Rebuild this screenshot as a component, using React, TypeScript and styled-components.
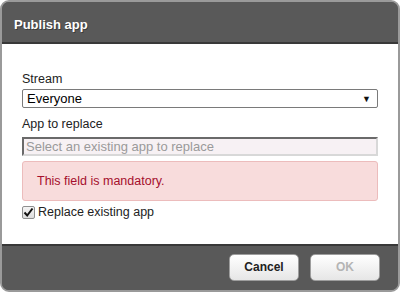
import React from "react";
import styled, { createGlobalStyle } from "styled-components";

const Global = createGlobalStyle`
  html, body { margin: 0; padding: 0; background: #ffffff; }
  * { box-sizing: border-box; }
`;

const Dialog = styled.div`
  width: 400px;
  height: 292px;
  border: 2px solid #9a9a9a;
  border-radius: 9px;
  overflow: hidden;
  display: flex;
  flex-direction: column;
  background: #595959;
  font-family: "Liberation Sans", Arial, sans-serif;
`;

const Header = styled.div`
  height: 42px;
  flex: none;
  background: #595959;
  border-bottom: 2px solid #383838;
  display: flex;
  align-items: center;
  padding: 4px 0 0 12px;
`;

const Title = styled.h1`
  margin: 0;
  font-size: 13px;
  font-weight: bold;
  color: #ffffff;
  text-shadow: 1px 1px 0 rgba(0, 0, 0, 0.35);
`;

const Body = styled.div`
  flex: 1;
  background: #ffffff;
  padding: 26px 20px 0 20px;
  display: flex;
  flex-direction: column;
`;

const Label = styled.div`
  font-size: 12.5px;
  color: #222;
  height: 18px;
  line-height: 18px;
`;

const Select = styled.div`
  margin-top: 1px;
  height: 19px;
  border: 1px solid #7a7a7a;
  border-radius: 2px;
  display: flex;
  align-items: center;
  justify-content: space-between;
  padding: 0 6px 0 4px;
  font-size: 13px;
  color: #000;
  margin-bottom: 7px;
`;

const Arrow = styled.span`
  font-size: 9px;
  color: #111;
`;

const Input = styled.div`
  margin-top: 4px;
  height: 19px;
  border-top: 2px solid #6a6a6a;
  border-left: 2px solid #6a6a6a;
  border-right: 2px solid #d8d8d8;
  border-bottom: 2px solid #d8d8d8;
  background: #f7f1f4;
  font-size: 13px;
  color: #9a9a9a;
  padding-left: 2px;
  line-height: 15px;
  white-space: nowrap;
  overflow: hidden;
`;

const ErrorBox = styled.div`
  margin-top: 5px;
  height: 40px;
  background: #f8dcdc;
  border: 1px solid #ecbcbc;
  border-radius: 3px;
  display: flex;
  align-items: center;
  padding-left: 14px;
  font-size: 12.5px;
  color: #a50f2d;
`;

const CheckRow = styled.label`
  margin-top: 4px;
  display: flex;
  align-items: center;
  gap: 3px;
  font-size: 12.5px;
  color: #222;
`;

const CheckBox = styled.span`
  width: 13px;
  height: 13px;
  border: 1px solid #8e8f8f;
  border-radius: 2px;
  background: linear-gradient(#f4f4f4, #dcdcdc);
  display: flex;
  align-items: center;
  justify-content: center;
`;

const Footer = styled.div`
  height: 46px;
  flex: none;
  background: #595959;
  border-top: 2px solid #383838;
  display: flex;
  align-items: center;
  justify-content: flex-end;
  gap: 11px;
  padding: 0 18px 2px 0;
`;

const Button = styled.button<{ $disabled?: boolean }>`
  width: 70px;
  height: 27px;
  border: 1px solid #9d9d9d;
  border-radius: 5px;
  background: linear-gradient(#ffffff, #e6e6e6);
  font-family: "Liberation Sans", Arial, sans-serif;
  font-weight: bold;
  font-size: 12px;
  color: ${(p) => (p.$disabled ? "#b4b4b4" : "#222")};
  padding: 0;
`;

export default function App() {
  return (
    <>
      <Global />
      <Dialog>
        <Header>
          <Title>Publish app</Title>
        </Header>
        <Body>
          <Label>Stream</Label>
          <Select>
            <span>Everyone</span>
            <Arrow>▼</Arrow>
          </Select>
          <Label>App to replace</Label>
          <Input>Select an existing app to replace</Input>
          <ErrorBox>This field is mandatory.</ErrorBox>
          <CheckRow>
            <CheckBox>
              <svg width="11" height="11" viewBox="0 0 11 11">
                <path d="M1.5 5.5 L4.2 8.5 L9.5 1.5" fill="none" stroke="#111" strokeWidth="2" />
              </svg>
            </CheckBox>
            Replace existing app
          </CheckRow>
        </Body>
        <Footer>
          <Button>Cancel</Button>
          <Button $disabled>OK</Button>
        </Footer>
      </Dialog>
    </>
  );
}
